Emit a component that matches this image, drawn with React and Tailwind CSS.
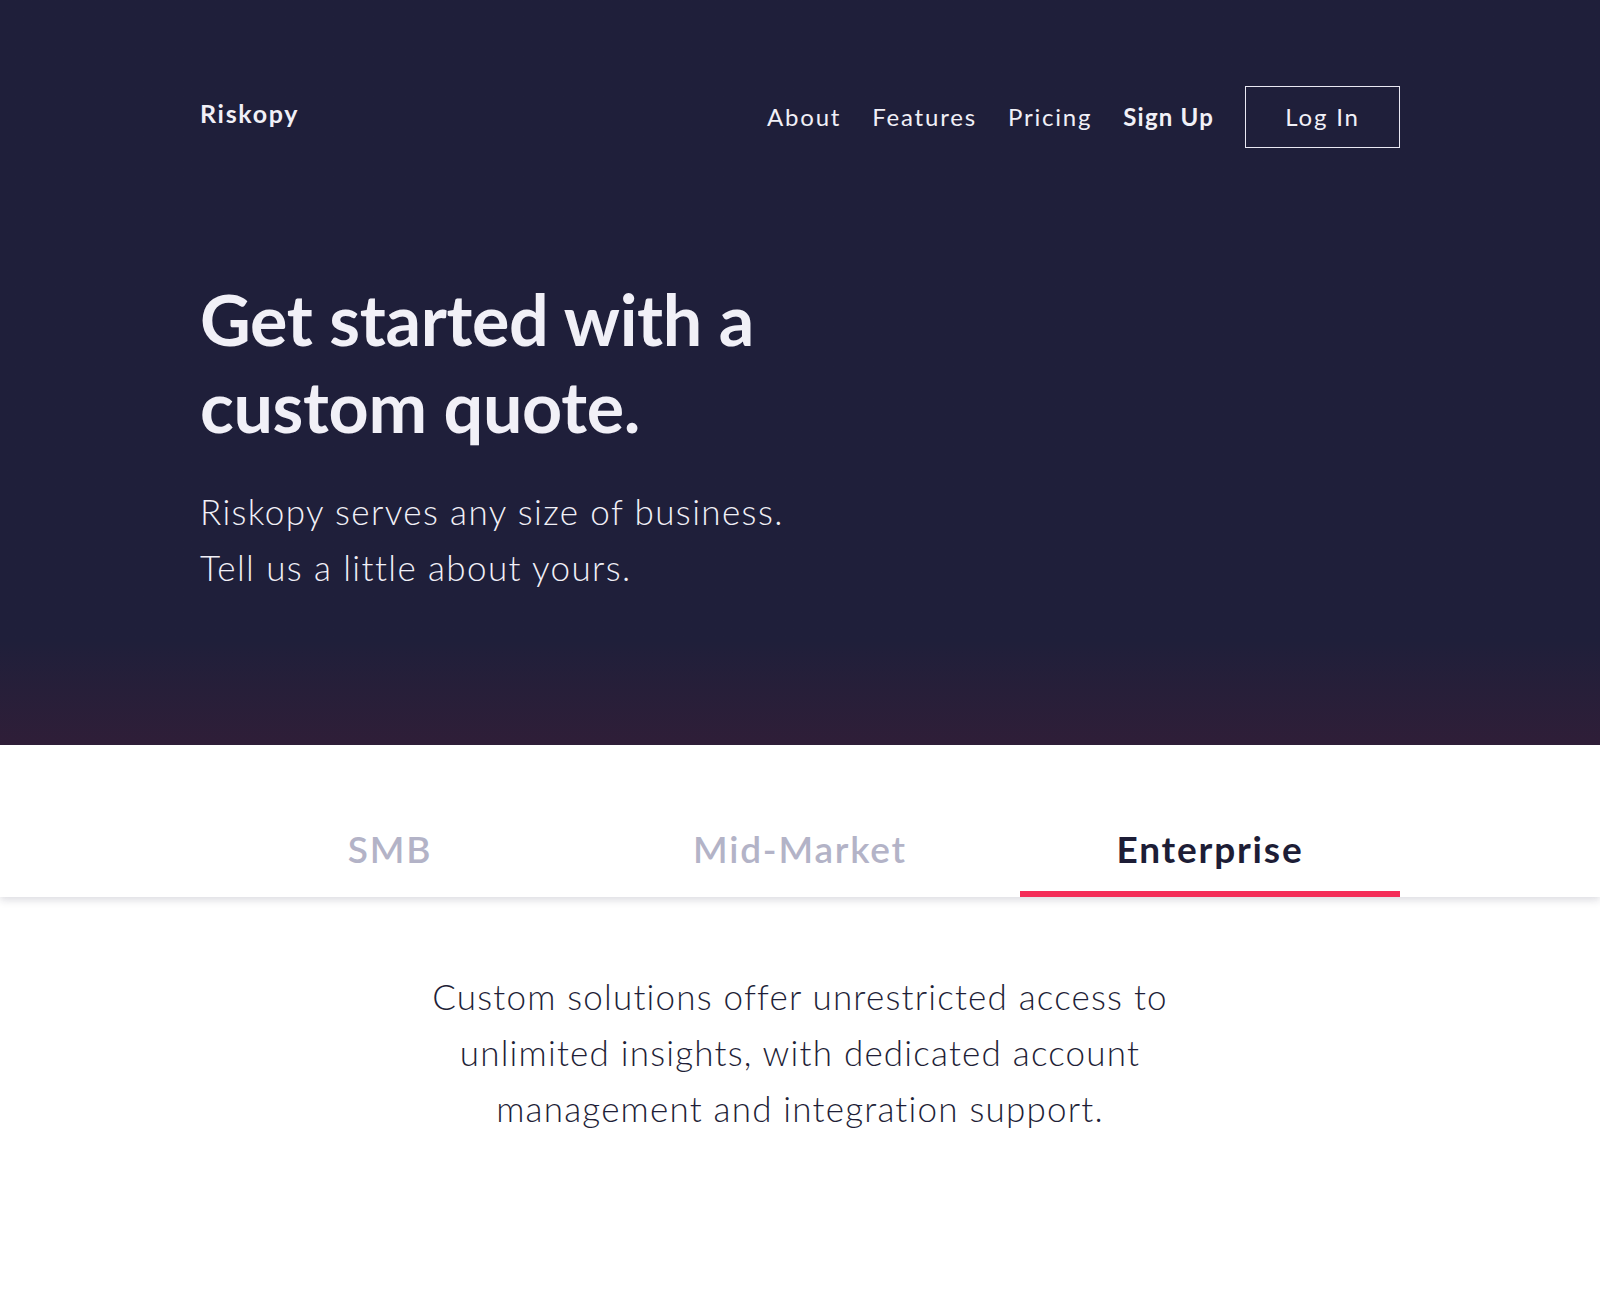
import React, { useState } from 'react';

const tabs = [
  { id: 'smb', label: 'SMB' },
  { id: 'mid', label: 'Mid-Market' },
  { id: 'enterprise', label: 'Enterprise' },
];

const copy = {
  smb: 'Simple plans give small teams the insights they need,<br />with quick setup and everything in one place.',
  mid: 'Flexible plans scale with your growing business,<br />with shared dashboards and priority support.',
};

export default function App() {
  const [active, setActive] = useState('enterprise');

  return (
    <div className="min-h-screen bg-white font-['Lato','Liberation_Sans',sans-serif]">
      <header className="bg-gradient-to-b from-[#1f1f3a] from-[86%] to-[#2f1e38] h-[745px]">
        <div className="w-[1200px] mx-auto pt-[86px]">
          <nav className="flex items-center justify-between">
            <a href="#" className="text-[25px] font-bold tracking-[1.7px] text-[#f1f0f7] -mt-[6px]">Riskopy</a>
            <div className="flex items-center gap-[31px] text-[24px] tracking-[1.8px] text-[#f1f0f7]">
              <a href="#">About</a>
              <a href="#">Features</a>
              <a href="#">Pricing</a>
              <a href="#" className="font-bold tracking-[1.2px]">Sign Up</a>
              <a href="#" className="w-[155px] h-[62px] flex items-center justify-center border border-[#e9e8f2]">Log In</a>
            </div>
          </nav>
          <h1 className="mt-[128px] text-[70px] leading-[87px] font-bold text-[#f1f0f7] tracking-[-0.3px]">
            Get started with a<br />custom quote.
          </h1>
          <p className="mt-[33px] text-[35px] leading-[56px] font-light tracking-[1.4px] text-[#f1f0f7]">
            Riskopy serves any size of business.<br />Tell us a little about yours.
          </p>
        </div>
      </header>

      <div className="shadow-[0_3px_8px_rgba(30,30,60,0.16)] relative">
        <div className="w-[1200px] mx-auto grid grid-cols-3 gap-[30px] pt-[76px]">
          {tabs.map(t => (
            <button
              key={t.id}
              onClick={() => setActive(t.id)}
              className={
                active === t.id
                  ? 'pb-[14px] border-b-[6px] border-[#f42d58] text-[37px] font-bold text-[#1d1d36] tracking-[1.8px]'
                  : 'pb-[14px] border-b-[6px] border-transparent text-[37px] font-semibold text-[#b3b3c7] tracking-[1.8px]'
              }
            >
              {t.label}
            </button>
          ))}
        </div>
      </div>

      <section className="pt-[71px] pb-[160px]">
        {active === 'enterprise' ? (
          <p className="w-[800px] mx-auto text-center text-[35px] leading-[56px] font-light tracking-[1.2px] text-[#1f1f38]">
            Custom solutions offer unrestricted access to<br />unlimited insights, with dedicated account<br />management and integration support.
          </p>
        ) : (
          <p
            className="w-[800px] mx-auto text-center text-[35px] leading-[56px] font-light tracking-[1.2px] text-[#1f1f38]"
            dangerouslySetInnerHTML={{ __html: copy[active] }}
          />
        )}
      </section>
    </div>
  );
}
